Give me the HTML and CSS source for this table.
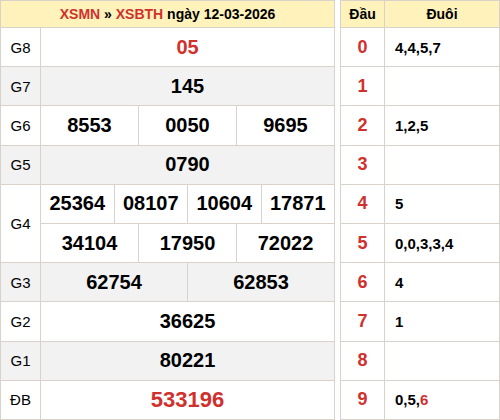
FILE: index.html
```html
<!DOCTYPE html>
<html>
<head>
<meta charset="utf-8">
<link rel="stylesheet" href="styles.css">
</head>
<body>
<div class="wrap">
  <table class="kq">
    <colgroup>
      <col class="c-lbl">
      <col><col><col><col><col><col><col><col><col><col><col><col>
    </colgroup>
    <thead>
      <tr><th colspan="13" class="title"><span class="red">XSMN</span> » <span class="red">XSBTH</span> ngày 12-03-2026</th></tr>
    </thead>
    <tbody>
      <tr><td class="lbl">G8</td><td colspan="12" class="num red">05</td></tr>
      <tr class="alt"><td class="lbl">G7</td><td colspan="12" class="num">145</td></tr>
      <tr><td class="lbl">G6</td><td colspan="4" class="num">8553</td><td colspan="4" class="num">0050</td><td colspan="4" class="num">9695</td></tr>
      <tr class="alt"><td class="lbl">G5</td><td colspan="12" class="num">0790</td></tr>
      <tr><td class="lbl" rowspan="2">G4</td><td colspan="3" class="num">25364</td><td colspan="3" class="num">08107</td><td colspan="3" class="num">10604</td><td colspan="3" class="num">17871</td></tr>
      <tr><td colspan="4" class="num">34104</td><td colspan="4" class="num">17950</td><td colspan="4" class="num">72022</td></tr>
      <tr class="alt"><td class="lbl">G3</td><td colspan="6" class="num">62754</td><td colspan="6" class="num">62853</td></tr>
      <tr><td class="lbl">G2</td><td colspan="12" class="num">36625</td></tr>
      <tr class="alt"><td class="lbl">G1</td><td colspan="12" class="num">80221</td></tr>
      <tr><td class="lbl">ĐB</td><td colspan="12" class="num db red">533196</td></tr>
    </tbody>
  </table>
  <table class="lt">
    <colgroup><col class="c-dau"><col></colgroup>
    <thead>
      <tr><th>Đầu</th><th>Đuôi</th></tr>
    </thead>
    <tbody>
      <tr><td class="dau">0</td><td class="duoi">4,4,5,7</td></tr>
      <tr><td class="dau">1</td><td class="duoi"></td></tr>
      <tr><td class="dau">2</td><td class="duoi">1,2,5</td></tr>
      <tr><td class="dau">3</td><td class="duoi"></td></tr>
      <tr><td class="dau">4</td><td class="duoi">5</td></tr>
      <tr><td class="dau">5</td><td class="duoi">0,0,3,3,4</td></tr>
      <tr><td class="dau">6</td><td class="duoi">4</td></tr>
      <tr><td class="dau">7</td><td class="duoi">1</td></tr>
      <tr><td class="dau">8</td><td class="duoi"></td></tr>
      <tr><td class="dau">9</td><td class="duoi">0,5,<span class="red">6</span></td></tr>
    </tbody>
  </table>
</div>
</body>
</html>
```

FILE: styles.css
```css
html, body {
  margin: 0;
  padding: 0;
  background: #fff;
}
body {
  font-family: "Liberation Sans", Arial, sans-serif;
  color: #000;
}
.wrap {
  display: flex;
  align-items: flex-start;
  gap: 5px;
  width: 500px;
}
table {
  border-collapse: collapse;
  table-layout: fixed;
}
th, td {
  border: 1px solid #d9d2ca;
  padding: 0;
  text-align: center;
}
.kq {
  width: 335px;
}
.c-lbl {
  width: 40px;
}
.lt {
  width: 160px;
}
.c-dau {
  width: 44px;
}
thead th {
  background: #fff2bb;
  height: 26px;
  font-size: 14px;
  font-weight: bold;
}
tbody td {
  height: 38.2px;
}
.alt td {
  background: #f2f2f2;
}
.lbl {
  font-size: 15px;
  background: #fff;
}
.num {
  font-size: 20px;
  font-weight: bold;
}
.num.db {
  font-size: 22px;
}
.red {
  color: #d0312d;
}
.dau {
  color: #d0312d;
  font-size: 18px;
  font-weight: bold;
}
.duoi {
  text-align: left;
  padding-left: 10px;
  font-size: 15px;
  font-weight: bold;
}
```
